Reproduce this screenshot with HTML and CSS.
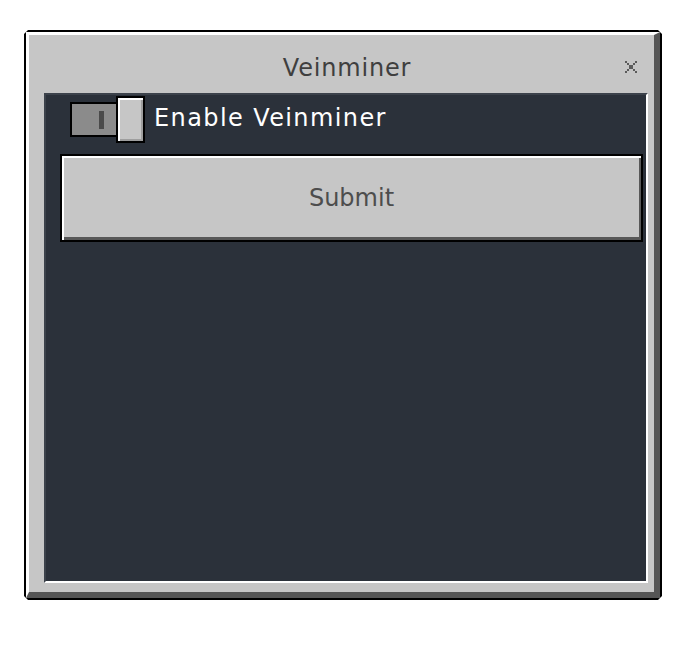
FILE: index.html
```html
<!DOCTYPE html>
<html>
<head>
<meta charset="utf-8">
<link rel="stylesheet" href="styles.css">
</head>
<body>
<div class="window">
  <div class="frame">
    <div class="titlebar">
      <span></span>
      <span class="title">Veinminer</span>
      <span class="close" aria-label="close">
        <svg width="12" height="12" viewBox="0 0 12 12" shape-rendering="crispEdges">
          <g fill="#5b5b5b">
            <rect x="0" y="0" width="2" height="2"/><rect x="2" y="2" width="2" height="2"/><rect x="4" y="4" width="4" height="4"/><rect x="8" y="2" width="2" height="2"/><rect x="10" y="0" width="2" height="2"/>
            <rect x="2" y="8" width="2" height="2"/><rect x="0" y="10" width="2" height="2"/><rect x="8" y="8" width="2" height="2"/><rect x="10" y="10" width="2" height="2"/>
          </g>
        </svg>
      </span>
    </div>
    <div class="panel">
      <div class="row">
        <div class="toggle">
          <div class="track"><span class="mark"></span></div>
          <div class="knob"></div>
        </div>
        <span class="label">Enable Veinminer</span>
      </div>
      <button class="submit">Submit</button>
    </div>
  </div>
</div>
</body>
</html>
```
FILE: styles.css
```css
html, body {
  margin: 0;
  padding: 0;
  background: #ffffff;
}
body {
  font-family: "DejaVu Sans", sans-serif;
}
.window {
  margin: 30px 0 0 24px;
  width: 638px;
  height: 570px;
  box-sizing: border-box;
  background: #000000;
  padding: 2px;
  clip-path: polygon(4px 0, calc(100% - 4px) 0, 100% 4px, 100% calc(100% - 4px), calc(100% - 4px) 100%, 4px 100%, 0 calc(100% - 4px), 0 4px);
}
.frame {
  height: 100%;
  box-sizing: border-box;
  background: #c6c6c6;
  border-top: 3px solid #ffffff;
  border-left: 3px solid #ffffff;
  border-right: 6px solid #555555;
  border-bottom: 6px solid #555555;
  padding: 0 6px 9px 15px;
  display: flex;
  flex-direction: column;
}
.titlebar {
  height: 58px;
  flex: none;
  display: grid;
  grid-template-columns: 1fr auto 1fr;
  align-items: center;
}
.title {
  font-size: 24px;
  letter-spacing: 0.8px;
  color: #3f3f3f;
  margin-top: 8px;
  margin-left: 2px;
}
.close {
  justify-self: end;
  margin-right: 11px;
  display: flex;
  margin-top: 6px;
}
.panel {
  flex: 1;
  background: #2b313a;
  border-top: 2px solid #3c424b;
  border-left: 2px solid #3c424b;
  border-right: 2px solid #ffffff;
  border-bottom: 2px solid #ffffff;
  padding: 1px 3px 0 14px;
}
.row {
  display: flex;
  align-items: center;
  padding-left: 10px;
  height: 47px;
}
.toggle {
  display: flex;
  align-items: center;
}
.track {
  width: 48px;
  height: 35px;
  box-sizing: border-box;
  border: 2px solid #000000;
  background: #8b8b8b;
  display: flex;
  align-items: center;
  justify-content: flex-end;
  padding-right: 12px;
}
.mark {
  width: 5px;
  height: 18px;
  background: #4a4a4a;
}
.knob {
  width: 29px;
  height: 47px;
  box-sizing: border-box;
  margin-left: -2px;
  border: 2px solid #000000;
  background: #c6c6c6;
  box-shadow: inset 2px 2px 0 #ffffff, inset -2px -2px 0 #9e9e9e;
}
.label {
  margin-left: 9px;
  color: #ffffff;
  font-size: 24px;
  letter-spacing: 1.4px;
  margin-top: -3px;
}
.submit {
  display: flex;
  align-items: center;
  justify-content: center;
  width: 583px;
  height: 88px;
  margin-top: 11px;
  box-sizing: border-box;
  border: 2px solid #000000;
  background: #c6c6c6;
  box-shadow: inset 2px 2px 0 #ffffff, inset -2px -3px 0 #585858;
  font-family: "DejaVu Sans", sans-serif;
  font-size: 24px;
  letter-spacing: 0px;
  color: #4d4d4d;
  padding: 0;
}
```
